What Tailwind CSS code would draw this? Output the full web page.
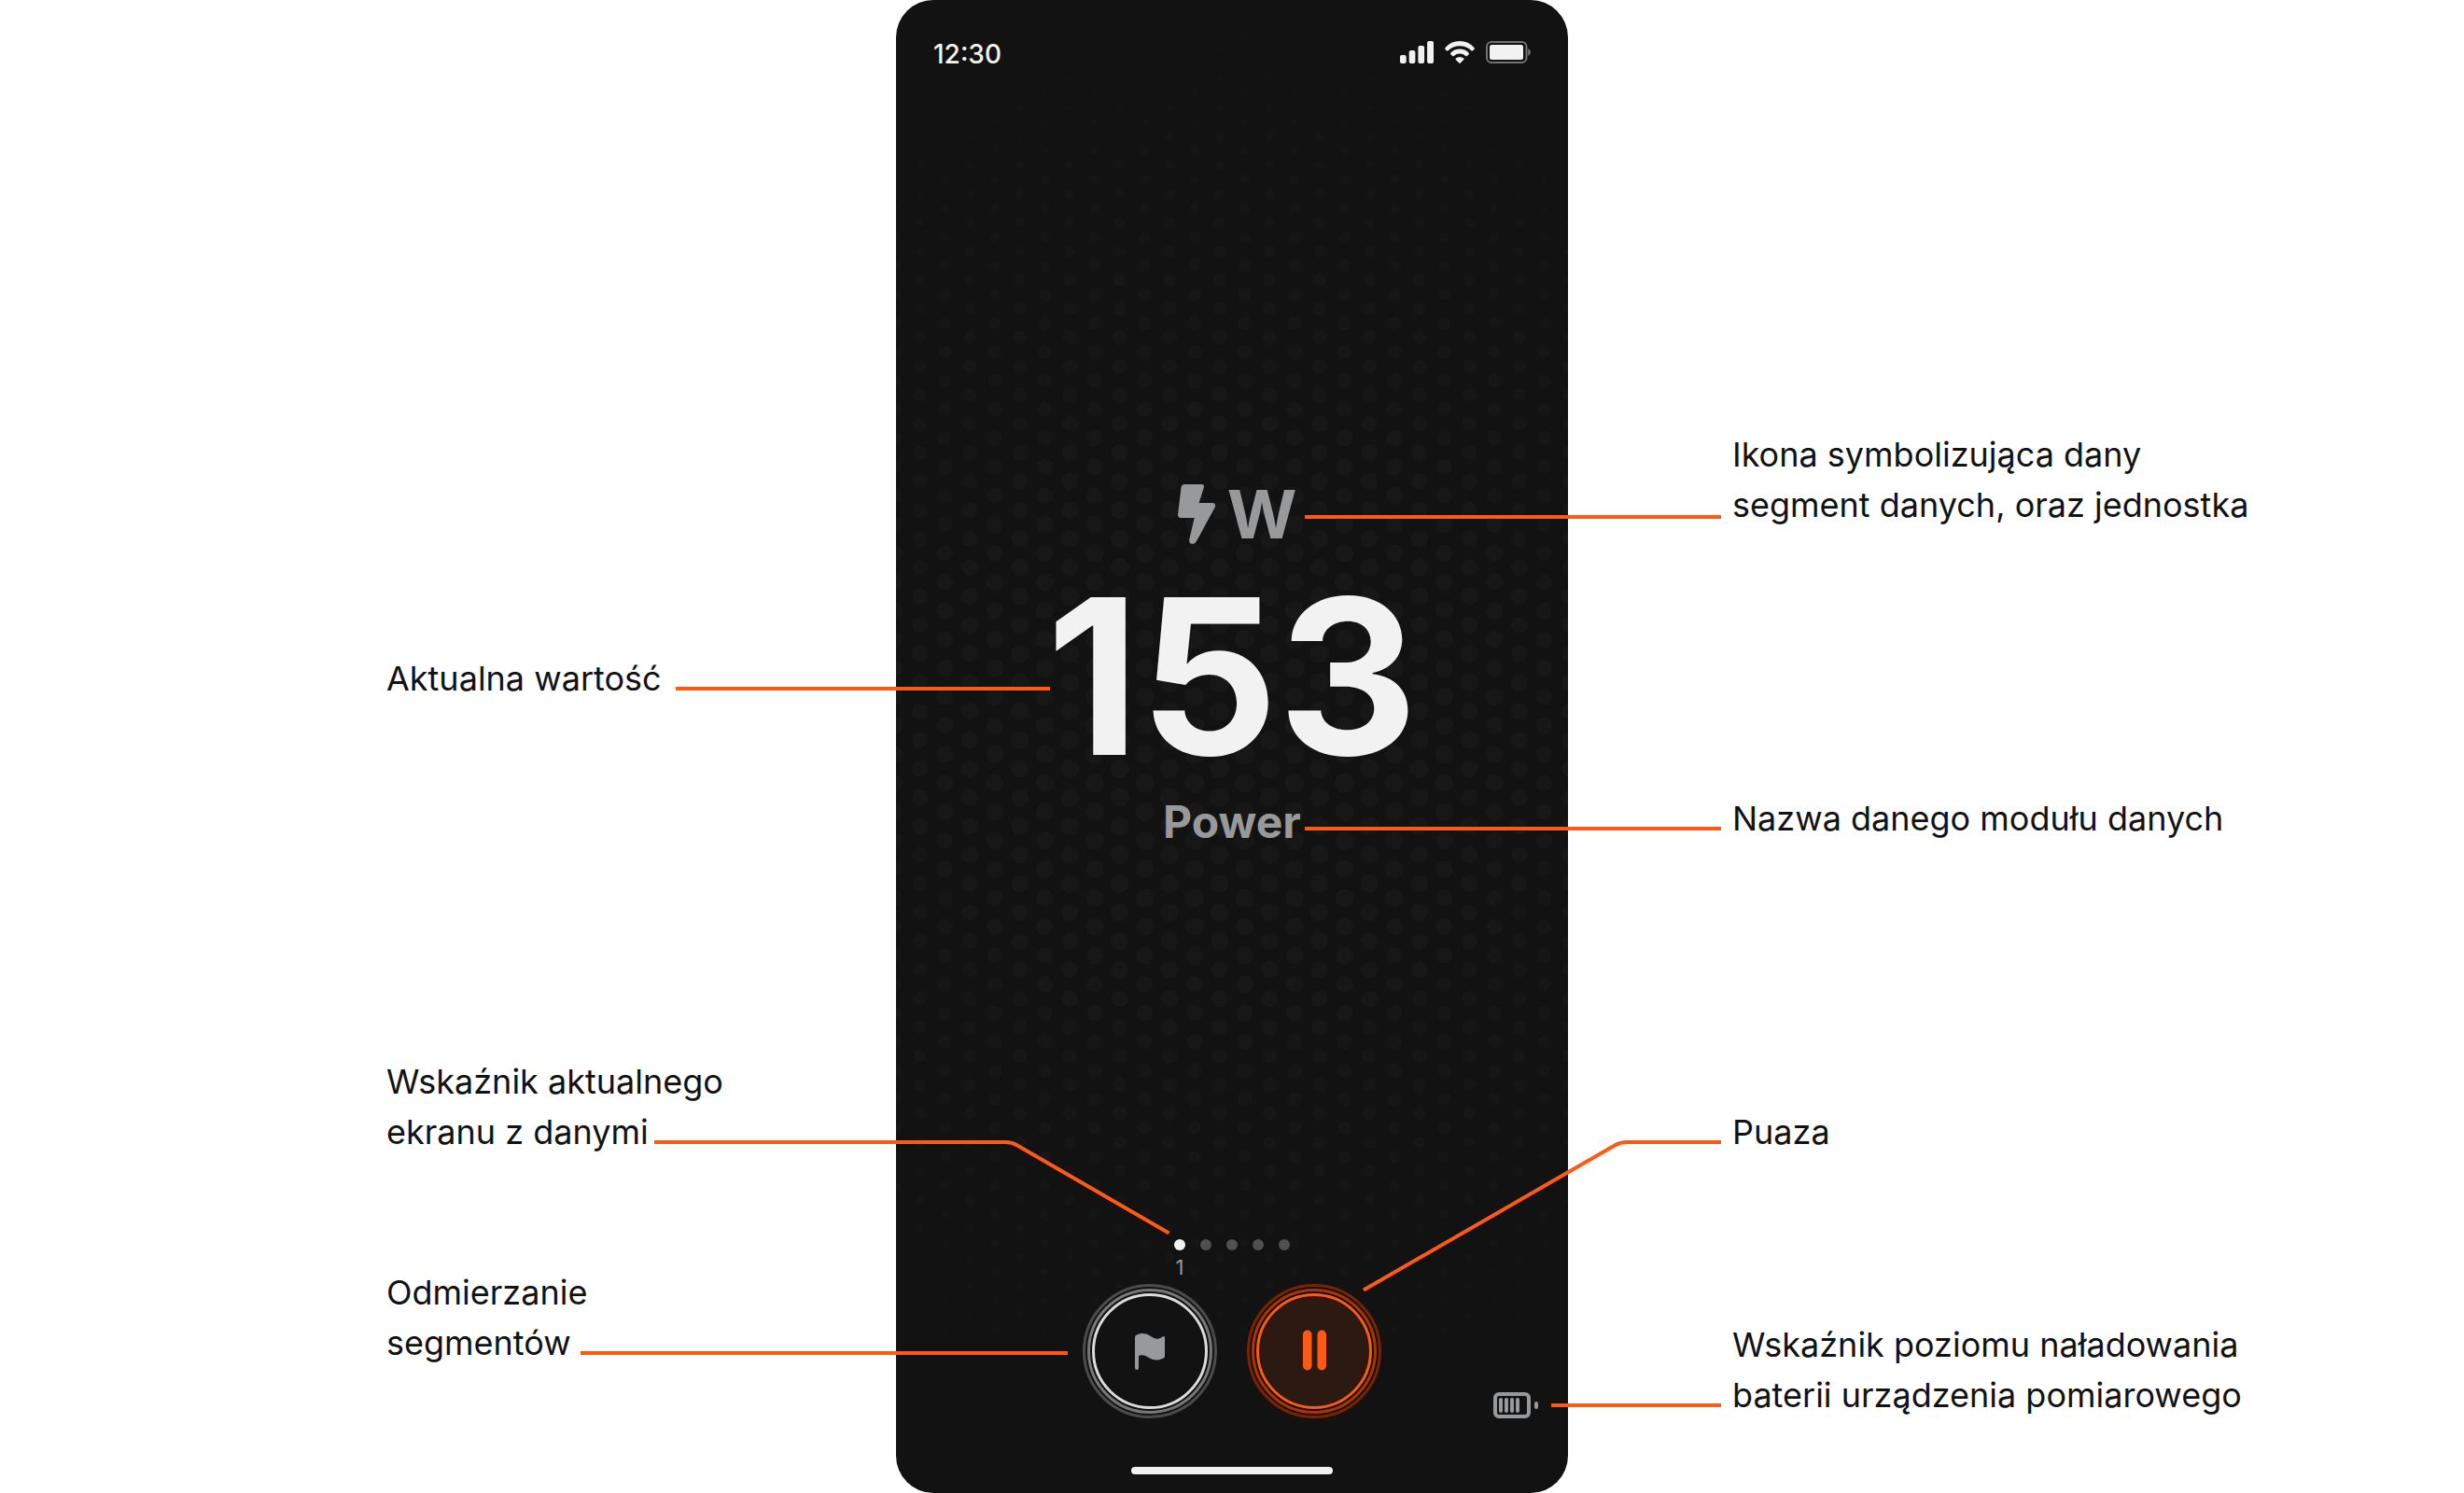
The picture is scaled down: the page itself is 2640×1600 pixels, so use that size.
<!DOCTYPE html>
<html lang="pl">
<head>
<meta charset="utf-8">
<title>Power – opis ekranu</title>
<script src="https://cdn.jsdelivr.net/npm/@tailwindcss/browser@4"></script>
</head>
<body class="flex min-h-screen justify-center overflow-x-hidden bg-white font-['Inter','Liberation_Sans',sans-serif] text-[#121212] [font-optical-sizing:none]">

<!-- Left captions -->
<aside class="flex min-w-0 flex-1 justify-end">
  <div class="w-[546px] shrink-0 pt-[700px] text-4xl leading-[54px]">
    <p>Aktualna wartość</p>
    <p class="mt-[378px]">Wskaźnik aktualnego<br>ekranu z danymi</p>
    <p class="mt-[118px]">Odmierzanie<br>segmentów</p>
  </div>
</aside>

<!-- Phone -->
<main class="relative w-[720px] shrink-0">
  <div class="relative flex min-h-full flex-col overflow-hidden rounded-[40px] bg-[#121212] text-[#f2f2f2]">
    <svg id="texture" class="absolute inset-0 h-full w-full" aria-hidden="true"></svg>

    <header class="relative flex items-start justify-between pt-10 pr-10 pl-10">
      <time class="text-[28px] leading-9 font-medium">12:30</time>
      <svg class="mt-1 h-6 w-[140px]" viewBox="0 0 140 24" fill="#f2f2f2" role="img" aria-label="Zasięg, Wi-Fi, bateria">
        <rect x="0" y="15" width="6.7" height="9" rx="2"/>
        <rect x="9.7" y="10" width="6.7" height="14" rx="2"/>
        <rect x="19.4" y="5" width="6.7" height="19" rx="2"/>
        <rect x="29.1" y="0" width="6.9" height="24" rx="2"/>
        <path d="M48.4 7.2Q54.500 0 64 0T79.600 7.200Q80.200 8 79.600 8.700L78 10.300Q77.200 11 76.400 10.300Q71.200 5.300 64 5.300T51.600 10.300Q50.800 11 50 10.300L48.400 8.700Q47.800 8 48.400 7.200Z"/>
        <path d="M54.300 12.700Q58 8.600 64 8.600T73.700 12.700Q74.400 13.500 73.700 14.200L71.900 16Q71.200 16.600 70.400 16Q67.500 13.600 64 13.600T57.600 16Q56.800 16.600 56.100 16L54.300 14.200Q53.600 13.500 54.300 12.700Z"/>
        <path d="M59.800 18.500Q61.500 17 64 17T68.200 18.500Q68.900 19.200 68.200 19.900L64.700 23.600Q64 24.200 63.300 23.600L59.800 19.900Q59.100 19.200 59.800 18.500Z"/>
        <rect x="93" y="1" width="42.500" height="22" rx="5" fill="none" stroke="#727272" stroke-width="2"/>
        <rect x="96" y="4" width="36" height="16" rx="2.500"/>
        <path d="M137.200 8Q140 9.500 140 12T137.200 16Z" fill="#727272"/>
      </svg>
    </header>

    <section class="relative mt-[439px] flex flex-col items-center font-bold">
      <div class="flex items-center text-7xl leading-[72px] text-[#98999b]">
        <svg class="h-16 w-16" viewBox="0 0 64 64" fill="currentColor" aria-hidden="true">
          <path d="M18.300 0H36Q40 0 38.800 3.500L33.500 20H48.500Q52.500 20.500 50.500 25L31 61Q29 64.400 26 63.800Q22.500 63 23.300 59L28.700 36H14.500Q11 36 11 32.500L14.500 3.500Q15 0 18.300 0Z"/>
        </svg>
        <span>W</span>
      </div>
      <p class="mt-[22px] text-[232px] leading-[232px] [font-kerning:none]">153</p>
      <h1 class="mt-4 text-5xl leading-[48px] text-[#98999b]">Power</h1>
    </section>

    <ol class="relative mt-[423px] flex h-11 justify-center gap-4">
      <li class="flex w-3 flex-col items-center gap-1"><span class="size-3 shrink-0 rounded-full bg-[#f2f2f2]"></span><span class="text-[22px] leading-7 text-[#98999b]">1</span></li>
      <li class="size-3 rounded-full bg-[#505050]"></li>
      <li class="size-3 rounded-full bg-[#505050]"></li>
      <li class="size-3 rounded-full bg-[#505050]"></li>
      <li class="size-3 rounded-full bg-[#505050]"></li>
    </ol>

    <div class="relative mt-1 grid grid-cols-[1fr_auto_1fr] items-end px-8">
      <div class="col-start-2 flex gap-8">
        <button type="button" aria-label="Segment" class="size-36 rounded-full bg-[#121212]">
          <svg class="size-36" viewBox="0 0 144 144" fill="none" stroke-width="3" aria-hidden="true">
            <circle cx="72" cy="72" r="70.500" stroke="#4b4b4b"/>
            <circle cx="72" cy="72" r="65.500" stroke="#777777"/>
            <circle cx="72" cy="72" r="60.500" stroke="#dcdcdc"/>
            <path fill="#98999b" d="M56 57Q56 55.500 57.500 54.800C62 52.500 67 52.300 72 55.500C77 59 81 60 85.500 56.500Q88 55 88 57.500V77.500Q88 78.800 86.800 79.400C81 82 76 82.500 70 78.500C66.500 76.300 63.500 75.500 60 77V90Q60 92 58 92T56 90Z"/>
          </svg>
        </button>
        <button type="button" aria-label="Pauza" class="size-36 rounded-full bg-[#121212]">
          <svg class="size-36" viewBox="0 0 144 144" fill="none" stroke-width="3" aria-hidden="true">
            <circle cx="72" cy="72" r="70.500" stroke="#7a2300"/>
            <circle cx="72" cy="72" r="65.500" stroke="#ac3400"/>
            <circle cx="72" cy="72" r="60.500" stroke="#ff5a15" fill="#2b1912"/>
            <rect x="60" y="49.500" width="9.500" height="43" rx="4.700" fill="#ff5a15"/>
            <rect x="75.500" y="49.500" width="9.500" height="43" rx="4.700" fill="#ff5a15"/>
          </svg>
        </button>
      </div>
      <svg class="h-7 w-12 justify-self-end" viewBox="0 0 48 28" fill="#98999b" role="img" aria-label="Bateria urządzenia">
        <rect x="2" y="2" width="36" height="24" rx="4" fill="none" stroke="#98999b" stroke-width="4"/>
        <rect x="6" y="6" width="4" height="16" rx="2"/>
        <rect x="12" y="6" width="4" height="16" rx="2"/>
        <rect x="18" y="6" width="4" height="16" rx="2"/>
        <rect x="24" y="6" width="4" height="16" rx="2"/>
        <rect x="44" y="10" width="4" height="8" rx="2"/>
      </svg>
    </div>

    <div class="relative mt-[52px] mb-5 h-2 w-[216px] self-center rounded-full bg-[#f2f2f2]"></div>
  </div>

  <!-- Leader lines, measured from the phone's top left corner -->
  <svg class="pointer-events-none absolute inset-0 h-full w-full overflow-visible" fill="none" stroke="#ff5a15" stroke-width="4" aria-hidden="true">
    <path d="M438 554H884"/>
    <path d="M-236 738H165"/>
    <path d="M438 888H884"/>
    <path d="M-259 1224H117.500Q124 1224 130 1227.500L292.500 1321.500"/>
    <path d="M884 1224H782.500Q776 1224 770 1227.500L501 1382.500"/>
    <path d="M-338 1450H184"/>
    <path d="M702 1506H884"/>
  </svg>
</main>

<!-- Right captions -->
<aside class="min-w-0 flex-1">
  <div class="pt-[460px] pl-44 text-4xl leading-[54px] whitespace-nowrap">
    <p>Ikona symbolizująca dany<br>segment danych, oraz jednostka</p>
    <p class="mt-[282px]">Nazwa danego modułu danych</p>
    <p class="mt-[282px]">Puaza</p>
    <p class="mt-[174px]">Wskaźnik poziomu naładowania<br>baterii urządzenia pomiarowego</p>
  </div>
</aside>

<script>
  // Staggered dot texture: dots grow and brighten towards the middle of the screen
  const shapes = [];
  for (let row = 0; row < 92; row++) {
    for (let col = 0; col < 15; col++) {
      const x = 25.7 + col * 53.5 + (row % 2 ? 26.8 : 0) - 53.5;
      const y = 23 + row * 15.4;
      const d = Math.min(1, Math.hypot((x - 360) / 820, (y - 770) / 780));
      const r = 10 * (1 - d * d) + 0.6;
      const a = 0.025 * (1 - d * d * 0.7);
      shapes.push(`<circle cx="${x.toFixed(1)}" cy="${y.toFixed(1)}" r="${r.toFixed(1)}" fill="#fff" fill-opacity="${a.toFixed(3)}"/>`);
    }
  }
  document.getElementById('texture').innerHTML = shapes.join('');
</script>
</body>
</html>
